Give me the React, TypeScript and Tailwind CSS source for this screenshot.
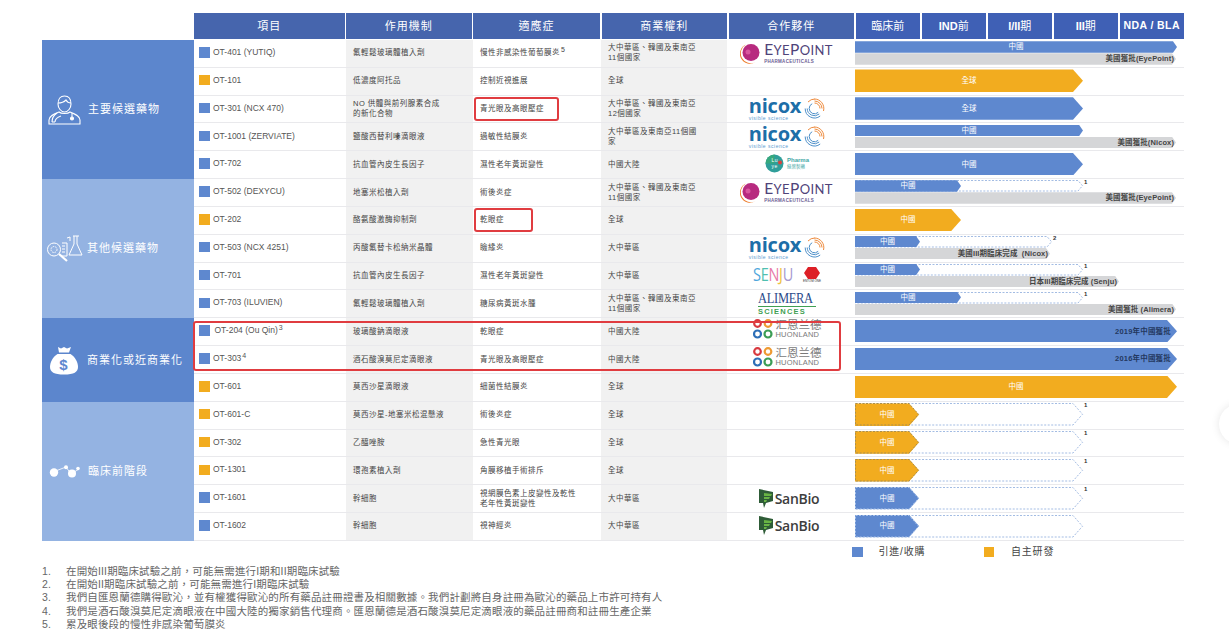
const BLUE = "#5e88cf";
const START = 855;

type Bar = {
  end: number;
  color: "blue" | "orange" | "gray";
  label: string;
  track?: number;
  note?: string;
  dashed?: boolean;
  dark?: boolean;
};

type Row = {
  name: string;
  sup?: string;
  tone: "blue" | "orange";
  mech: string[];
  ind: string[];
  indSup?: string;
  rights: string[];
  partner?: "eyepoint" | "nicox" | "luye" | "senju" | "alimera" | "huonland" | "sanbio";
  bars: Bar[];
  box?: number;
  nudge?: boolean;
};

const rights11 = ["大中華區、韓國及東南亞", "11個國家"];
const usEye: Bar = { end: 1176, color: "gray", label: "美國獲批(EyePoint)" };

const rows: Row[] = [
  { name: "OT-401 (YUTIQ)", tone: "blue", mech: ["氟輕鬆玻璃體植入劑"], ind: ["慢性非感染性葡萄膜炎"], indSup: "5", rights: rights11, partner: "eyepoint", bars: [{ end: 1177, color: "blue", label: "中國" }, usEye] },
  { name: "OT-101", tone: "orange", mech: ["低濃度阿托品"], ind: ["控制近視進展"], rights: ["全球"], bars: [{ end: 1083, color: "orange", label: "全球" }] },
  { name: "OT-301 (NCX 470)", tone: "blue", mech: ["NO 供體與前列腺素合成", "的新化合物"], ind: ["青光眼及高眼壓症"], box: 85, rights: ["大中華區、韓國及東南亞", "12個國家"], partner: "nicox", bars: [{ end: 1083, color: "blue", label: "全球" }] },
  { name: "OT-1001 (ZERVIATE)", tone: "blue", mech: ["鹽酸西替利嗪滴眼液"], ind: ["過敏性結膜炎"], rights: ["大中華區及東南亞11個國", "家"], partner: "nicox", bars: [{ end: 1083, color: "blue", label: "中國" }, { end: 1176, color: "gray", label: "美國獲批(Nicox)" }] },
  { name: "OT-702", tone: "blue", mech: ["抗血管內皮生長因子"], ind: ["濕性老年黃斑變性"], rights: ["中國大陸"], partner: "luye", bars: [{ end: 1083, color: "blue", label: "中國" }] },
  { name: "OT-502 (DEXYCU)", tone: "blue", mech: ["地塞米松植入劑"], ind: ["術後炎症"], rights: rights11, partner: "eyepoint", bars: [{ end: 961, color: "blue", label: "中國", track: 1083, note: "1" }, usEye] },
  { name: "OT-202", tone: "orange", mech: ["酪氨酸激酶抑制劑"], ind: ["乾眼症"], box: 59, rights: ["全球"], bars: [{ end: 961, color: "orange", label: "中國" }] },
  { name: "OT-503 (NCX 4251)", tone: "blue", mech: ["丙酸氟替卡松納米晶體"], ind: ["瞼緣炎"], rights: ["大中華區"], partner: "nicox", bars: [{ end: 920, color: "blue", label: "中國", track: 1052, note: "2" }, { end: 1050, color: "gray", label: "美國III期臨床完成  (Nicox)" }] },
  { name: "OT-701", tone: "blue", mech: ["抗血管內皮生長因子"], ind: ["濕性老年黃斑變性"], rights: ["大中華區"], partner: "senju", bars: [{ end: 920, color: "blue", label: "中國", track: 1083, note: "1" }, { end: 1119, color: "gray", label: "日本III期臨床完成 (Senju)" }] },
  { name: "OT-703 (ILUVIEN)", tone: "blue", mech: ["氟輕鬆玻璃體植入劑"], ind: ["糖尿病黃斑水腫"], rights: rights11, partner: "alimera", bars: [{ end: 961, color: "blue", label: "中國", track: 1083, note: "1" }, { end: 1176, color: "gray", label: "美國獲批 (Alimera)" }] },
  { name: "OT-204 (Ou Qin)", sup: "3", nudge: true, tone: "blue", mech: ["玻璃酸鈉滴眼液"], ind: ["乾眼症"], rights: ["中國大陸"], partner: "huonland", bars: [{ end: 1177, color: "blue", label: "2019年中國獲批", dark: true }] },
  { name: "OT-303", sup: "4", tone: "blue", mech: ["酒石酸溴莫尼定滴眼液"], ind: ["青光眼及高眼壓症"], rights: ["中國大陸"], partner: "huonland", bars: [{ end: 1177, color: "blue", label: "2016年中國獲批", dark: true }] },
  { name: "OT-601", tone: "orange", mech: ["莫西沙星滴眼液"], ind: ["細菌性結膜炎"], rights: ["全球"], bars: [{ end: 1177, color: "orange", label: "中國" }] },
  { name: "OT-601-C", tone: "orange", mech: ["莫西沙星-地塞米松混懸液"], ind: ["術後炎症"], rights: ["全球"], bars: [{ end: 919, color: "orange", label: "中國", track: 1083, note: "1", dashed: true }] },
  { name: "OT-302", tone: "orange", mech: ["乙醯唑胺"], ind: ["急性青光眼"], rights: ["全球"], bars: [{ end: 919, color: "orange", label: "中國", track: 1083, note: "1", dashed: true }] },
  { name: "OT-1301", tone: "orange", mech: ["環孢素植入劑"], ind: ["角膜移植手術排斥"], rights: ["全球"], bars: [{ end: 919, color: "orange", label: "中國", track: 1083, note: "1", dashed: true }] },
  { name: "OT-1601", tone: "blue", mech: ["幹細胞"], ind: ["視網膜色素上皮變性及乾性", "老年性黃斑變性"], rights: ["大中華區"], partner: "sanbio", bars: [{ end: 919, color: "blue", label: "中國", track: 1083, note: "1", dashed: true }] },
  { name: "OT-1602", tone: "blue", mech: ["幹細胞"], ind: ["視神經炎"], rights: ["大中華區"], partner: "sanbio", bars: [{ end: 919, color: "blue", label: "中國", track: 1083, dashed: true }] },
];

const headers = [
  { label: "項目", w: "w-[150.500px]" },
  { label: "作用機制", w: "w-[125.500px]" },
  { label: "適應症", w: "w-[127px]" },
  { label: "商業權利", w: "w-[125.500px]" },
  { label: "合作夥伴", w: "w-[125.500px]" },
];

const phases = [
  { text: "臨床前", latin: "" },
  { text: "前", latin: "IND" },
  { text: "期", latin: "I/II" },
  { text: "期", latin: "III" },
  { text: "", latin: "NDA / BLA" },
];

const notes = [
  "在開始III期臨床試驗之前\uFF0C可能無需進行I期和II期臨床試驗",
  "在開始II期臨床試驗之前\uFF0C可能無需進行I期臨床試驗",
  "我們自匯恩蘭德購得歐沁\uFF0C並有權獲得歐沁的所有藥品註冊證書及相關數據。我們計劃將自身註冊為歐沁的藥品上市許可持有人",
  "我們是酒石酸溴莫尼定滴眼液在中國大陸的獨家銷售代理商。匯恩蘭德是酒石酸溴莫尼定滴眼液的藥品註冊商和註冊生產企業",
  "累及眼後段的慢性非感染葡萄膜炎",
];

const DoctorIcon = () => (
  <svg width="33" height="30" viewBox="0 0 33 30" fill="none" stroke="white" strokeWidth="1.1">
    <path d="M10 9c0-5 2.500-8 6.500-8s6.500 3 6.500 8c0 4-3 8-6.500 8S10 13 10 9z" />
    <path d="M10 8c3 0 6-1 8-3 1 2 3 3 5 3" />
    <path d="M1 29v-4c0-4 5-6 10-8 2 2 9 2 11 0 5 2 10 4 10 8v4z" />
    <path d="M9 18c-3 2-5 5-5 9M4 27h3M24 18v4" />
    <path d="M7 27c0-3 3-5 6-6" />
    <circle cx="24" cy="23.500" r="1.500" fill="white" />
  </svg>
);

const LabIcon = () => (
  <svg width="37" height="27" viewBox="0 0 37 27" fill="none" stroke="white" strokeWidth="1">
    <circle cx="8" cy="14.500" r="6.500" />
    <circle cx="8" cy="14.500" r="3" strokeDasharray="1.500 1" />
    <path d="M13 19l8 7" strokeWidth="2.200" />
    <path d="M16 8h5v13h-5M16 11h3M16 14h3M16 17h3" />
    <path d="M21 3l3-1v4M27 1h6M28 1v8l-5 11h13L31 9V1" />
  </svg>
);

const BagIcon = () => (
  <svg width="30" height="29" viewBox="0 0 30 29">
    <path d="M9 1l3 1.500L15 1l3 1.500L22 1l-2 5.500h-10z" fill="white" />
    <path d="M8.500 8h13C26 11 29 16 29 21c0 5-4 7.500-14 7.500S1 26 1 21C1 16 4 11 8.500 8z" fill="white" />
    <text x="15" y="24" textAnchor="middle" fontSize="15" fontWeight="700" fill={BLUE} fontFamily="Liberation Sans">$</text>
  </svg>
);

const MoleculeIcon = () => (
  <svg width="31" height="13" viewBox="0 0 31 13" fill="white" stroke="white">
    <path d="M4 7L17 2l5 7 8-5" strokeWidth="0.800" fill="none" />
    <circle cx="5" cy="7.500" r="4.200" stroke="none" />
    <circle cx="17" cy="2.200" r="2" stroke="none" />
    <circle cx="23" cy="8.500" r="4" stroke="none" />
    <circle cx="29" cy="3.500" r="1.800" stroke="none" />
  </svg>
);

const EyePoint = () => (
  <div className="flex items-center gap-[4px] ml-[-1px]">
    <svg width="20" height="21" viewBox="0 0 20 21" className="shrink-0">
      <path d="M6 1.500A10 10 0 1 0 15.500 19 9 9 0 0 1 6 1.500z" fill="#ee7d2d" />
      <circle cx="11" cy="9.500" r="8.500" fill="#b72a7f" />
      <circle cx="8" cy="9" r="2.500" fill="#d9569f" />
    </svg>
    <div className="flex flex-col leading-none text-[#4f4379]">
      <span className="[font-family:Lato,sans-serif] text-[15.500px] tracking-[0.4px] leading-[14px] whitespace-nowrap">
        E<span className="text-[13px]">YE</span>P<span className="text-[13px]">OINT</span>
      </span>
      <span className="text-[4.500px] font-bold tracking-[0.3px] mt-[3px] text-[#6b5d92] whitespace-nowrap">PHARMACEUTICALS</span>
    </div>
  </div>
);

const Nicox = () => (
  <div className="flex items-start gap-[3px] mt-[1px]">
    <div className="flex flex-col">
      <span className="[font-family:'Open_Sans',sans-serif] font-bold text-[20px] leading-[16px] text-[#1d6ea8] tracking-[-0.2px]">nicox</span>
      <span className="text-[5px] leading-[6px] mt-[1px] text-[#5b9bd0] whitespace-nowrap">visible science</span>
    </div>
    <svg width="21" height="21" viewBox="0 0 21 21" fill="none" strokeWidth="1" className="shrink-0">
      <path d="M10.500 1a9.500 9.500 0 0 1 9 12" stroke="#ee8a3c" />
      <path d="M4 4a9.500 9.500 0 0 1 7-3" stroke="#ee8a3c" />
      <path d="M10.500 3a7.500 7.500 0 0 1 7.500 7.500" stroke="#ee8a3c" />
      <path d="M10.500 5a5.500 5.500 0 0 1 5.500 5.500" stroke="#ee8a3c" />
      <path d="M1.200 10.500a9.300 9.300 0 0 0 15 7.500" stroke="#4c8fc9" />
      <path d="M3.200 10.500a7.300 7.300 0 0 0 12 5.500" stroke="#4c8fc9" />
      <path d="M5.200 10.500a5.300 5.300 0 0 0 9 3.800" stroke="#4c8fc9" />
      <path d="M5.200 10.500a5.300 5.300 0 0 1 3-4.800" stroke="#4c8fc9" />
    </svg>
  </div>
);

const Luye = () => (
  <div className="flex items-center gap-[3px] mt-[-2px]">
    <svg width="19" height="19" viewBox="0 0 19 19" className="shrink-0">
      <circle cx="9.500" cy="9.500" r="9" fill="#2f9e9a" />
      <path d="M9.500.5a9 9 0 0 0-9 9h9z" fill="#37a87e" />
      <circle cx="15" cy="8.500" r="2" fill="#d9433d" />
      <text x="6.500" y="8" fontSize="5" fill="white" fontFamily="Liberation Sans">Lu</text>
      <text x="6.500" y="14" fontSize="5" fill="white" fontFamily="Liberation Sans">ye</text>
    </svg>
    <div className="flex flex-col tracking-normal">
      <span className="text-[6px] leading-[7px] font-bold text-[#43a8a6]">Pharma</span>
      <span className="text-[4.500px] leading-[6px] text-[#43a8a6]">綠葉製藥</span>
    </div>
  </div>
);

const Senju = () => (
  <div className="flex items-center gap-[10px] mt-[-3px]">
    <span className="inline-block scale-y-[1.3] [font-family:'Open_Sans',sans-serif] text-[14.500px] leading-[18px] tracking-[-0.3px]">
      <span className="text-[#4fa6dc]">S</span>
      <span className="text-[#4fbfb0]">E</span>
      <span className="text-[#e77aa8]">N</span>
      <span className="text-[#eec241]">J</span>
      <span className="text-[#a79ad0]">U</span>
    </span>
    <div className="flex flex-col items-center">
      <svg width="16" height="12" viewBox="0 0 16 12">
        <path d="M4 0h8l4 6-4 6H4L0 6z" fill="#dd1f26" />
      </svg>
      <span className="text-[3px] leading-[4px] tracking-normal text-[#333] whitespace-nowrap">ENTOM ONE</span>
    </div>
  </div>
);

const Alimera = () => (
  <div className="flex flex-col mt-[-1px] w-[58px] tracking-normal">
    <span className="[font-family:'Liberation_Serif',serif] text-[12.500px] leading-[14px] text-[#2b4b8a] tracking-[-0.3px] scale-y-[1.15] whitespace-nowrap">ALIMERA</span>
    <div className="h-[1px] bg-[#3fa052] mt-[1px]" />
    <span className="text-[7.500px] leading-[9px] font-bold text-[#3fa052] tracking-[1.2px] whitespace-nowrap">SCIENCES</span>
  </div>
);

const Huonland = () => (
  <div className="flex items-center gap-[3px] mt-[-5px] tracking-normal">
    <svg width="20" height="20" viewBox="0 0 20 20" fill="none" strokeWidth="2.200" className="shrink-0">
      <circle cx="4.500" cy="4.500" r="3.300" stroke="#d8393f" />
      <circle cx="15" cy="4.500" r="3.300" stroke="#ee9a32" />
      <circle cx="4.500" cy="15" r="3.500" stroke="#2e6fb7" />
      <circle cx="15" cy="15" r="3.500" stroke="#3c9d55" />
    </svg>
    <div className="flex flex-col text-[#7a7a7a]">
      <span className="text-[11.500px] leading-[12px] whitespace-nowrap">汇恩兰德</span>
      <span className="text-[7.500px] leading-[8px] tracking-[0.2px] whitespace-nowrap">HUONLAND</span>
    </div>
  </div>
);

const SanBio = () => (
  <div className="flex items-center gap-[1px] ml-[4px] tracking-normal">
    <svg width="15" height="20" viewBox="0 0 15 20" className="shrink-0">
      <path d="M0 0l14 3v9l-7 2-2 5-1-5H0z" fill="#2e5c37" />
      <path d="M5 4l8 1-1 2H5zM5 8h6l-1 2H5zM5 11h3l-1 2H5z" fill="#69b545" />
    </svg>
    <span className="[font-family:'Open_Sans',sans-serif] font-semibold text-[14px] leading-none text-[#3d3d3d] tracking-[-0.3px]">SanBio</span>
  </div>
);

const logos = {
  eyepoint: EyePoint,
  nicox: Nicox,
  luye: Luye,
  senju: Senju,
  alimera: Alimera,
  huonland: Huonland,
  sanbio: SanBio,
};

const Outline = ({ width, height, tip, stroke }: { width: number; height: number; tip: number; stroke: string }) => (
  <svg width={width} height={height} className="absolute left-0 top-0 overflow-visible">
    <path
      d={`M0.500 0.500H${width - tip}L${width - 0.5} ${height / 2}L${width - tip} ${height - 0.5}H0.500V0.500`}
      fill="none"
      stroke={stroke}
      strokeWidth="1"
      strokeDasharray="2 1.500"
    />
  </svg>
);

const Shape = ({ bar, height }: { bar: Bar; height: number }) => {
  const big = height > 15;
  const bg = bar.color === "blue" ? "bg-[#5e88cf]" : bar.color === "orange" ? "bg-[#f2ac1f]" : "bg-[#d5d6d8]";
  return (
    <div
      className={`${bg} ${big ? "[clip-path:polygon(0_0,calc(100%-10px)_0,100%_50%,calc(100%-10px)_100%,0_100%)]" : "[clip-path:polygon(0_0,calc(100%-4px)_0,100%_50%,calc(100%-4px)_100%,0_100%)]"} flex items-center h-full`}
      style={{ width: bar.end - START }}
    >
      {bar.color === "gray" ? (
        <span className="ml-auto pr-[2px] text-[7.500px] font-bold text-[#444] tracking-[0.1px] whitespace-pre">{bar.label}</span>
      ) : bar.dark ? (
        <span className="ml-auto pr-[6px] text-[7.500px] font-bold text-[#24385f] tracking-[0.2px] whitespace-nowrap">{bar.label}</span>
      ) : (
        <span className="w-full text-center text-[7.500px] text-white tracking-[0.1px]">{bar.label}</span>
      )}
    </div>
  );
};

const BarRow = ({ bar, height }: { bar: Bar; height: number }) => {
  if (!bar.track) {
    return (
      <div style={{ height }}>
        <Shape bar={bar} height={height} />
      </div>
    );
  }
  const width = bar.track - START;
  const tip = height > 15 ? 10 : 5;
  return (
    <div className="relative" style={{ height, width }}>
      <Outline width={width} height={height} tip={tip} stroke="#a3bce3" />
      <div className="relative h-full">
        <Shape bar={bar} height={height} />
        {bar.dashed && (
          <Outline
            width={bar.end - START}
            height={height}
            tip={tip}
            stroke={bar.color === "orange" ? "#a98f4f" : "#a9c2e8"}
          />
        )}
      </div>
      {bar.note && (
        <span className="absolute left-full top-[-1px] ml-[1px] text-[6px] leading-[7px] font-bold text-[#333]">{bar.note}</span>
      )}
    </div>
  );
};

const TableRow = ({ row }: { row: Row }) => {
  const Logo = row.partner ? logos[row.partner] : null;
  const height = row.bars.length > 1 ? 11.5 : 22.5;
  return (
    <div className="flex h-[27.830px] border-b border-[#e9e9ec] text-[7.500px] text-[#444] tracking-[0.5px]">
      <div className="w-[152px] flex items-center pl-[5px] pb-[2px] text-[8.500px] text-[#555] tracking-normal">
        <span className={`w-[10.500px] h-[10.500px] shrink-0 ${row.tone === "blue" ? "bg-[#5e88cf]" : "bg-[#f2ac1f]"}`} />
        <span className={`${row.nudge ? "ml-[5px]" : "ml-[3.500px]"} whitespace-nowrap`}>
          {row.name}
          {row.sup && <sup className="text-[7px] ml-[1px]">{row.sup}</sup>}
        </span>
      </div>
      <div className="w-[126.500px] bg-[#f1f1f1] flex flex-col justify-center pl-[7px] leading-[10px]">
        {row.mech.map((t) => (
          <span key={t} className="whitespace-nowrap">{t}</span>
        ))}
      </div>
      <div className="w-[128.500px] relative flex flex-col justify-center pl-[7.500px] leading-[10px]">
        {row.ind.map((t) => (
          <span key={t} className="whitespace-nowrap">
            {t}
            {row.indSup && <sup className="text-[7px] ml-[1px]">{row.indSup}</sup>}
          </span>
        ))}
        {row.box && (
          <div
            className="absolute left-[1px] top-[1px] h-[24px] border-2 border-[#e03c40] rounded-[3px]"
            style={{ width: row.box }}
          />
        )}
      </div>
      <div className="w-[126px] bg-[#f1f1f1] flex flex-col justify-center pl-[7px] leading-[10px]">
        {row.rights.map((t) => (
          <span key={t} className="whitespace-nowrap">{t}</span>
        ))}
      </div>
      <div className="w-[128px] flex items-center justify-center pr-[8px]">{Logo && <Logo />}</div>
      <div className="w-[329px] flex flex-col justify-center gap-[0.500px] pb-[1px]">
        {row.bars.map((bar) => (
          <BarRow key={bar.label} bar={bar} height={height} />
        ))}
      </div>
    </div>
  );
};

const groups = [
  { label: "主要候選藥物", icon: <DoctorIcon />, bg: "bg-[#5c86cd]", h: "h-[139.150px]", gap: "gap-[7px]", pl: "pl-[6px]" },
  { label: "其他候選藥物", icon: <LabIcon />, bg: "bg-[#94b3e2]", h: "h-[139.150px]", gap: "gap-[4px]", pl: "pl-[4px]" },
  { label: "商業化或近商業化", icon: <BagIcon />, bg: "bg-[#5c86cd]", h: "h-[83.490px]", gap: "gap-[8px]", pl: "pl-[7px]" },
  { label: "臨床前階段", icon: <MoleculeIcon />, bg: "bg-[#94b3e2]", h: "h-[139.150px]", gap: "gap-[8px]", pl: "pl-[7px]" },
];

export default function App() {
  return (
    <div lang="zh-Hant" className="relative w-[1229px] h-[640px] overflow-hidden bg-white [font-family:'Liberation_Sans','Noto_Sans_CJK_TC',sans-serif]">
      <div className="pt-[13px] pl-[42px]">
        {/* Header */}
        <div className="flex ml-[152px] h-[26px] gap-[1.500px] text-white text-[11px] tracking-[1px]">
          {headers.map((h) => (
            <div key={h.label} className={`${h.w} bg-[#4665ad] flex items-center justify-center`}>{h.label}</div>
          ))}
          {phases.map((p) => (
            <div
              key={p.latin + p.text}
              className={`w-[64.500px] bg-[#3f60b5] flex items-center justify-center whitespace-nowrap ${p.latin === "NDA / BLA" ? "tracking-[0.400px] text-[10.500px]" : "tracking-normal"}`}
            >
              <span className="font-bold">{p.latin}</span>
              {p.text}
            </div>
          ))}
        </div>

        {/* Body */}
        <div className="relative flex mt-[1px]">
          <div className="w-[152px] shrink-0 flex flex-col pr-[0.500px]">
            {groups.map((g) => (
              <div key={g.label} className={`${g.bg} ${g.h} ${g.gap} ${g.pl} flex items-center text-white text-[11px] tracking-[1px] whitespace-nowrap`}>
                {g.icon}
                <span>{g.label}</span>
              </div>
            ))}
          </div>
          <div className="flex flex-col">
            {rows.map((row) => (
              <TableRow key={row.name} row={row} />
            ))}
          </div>
          {/* highlight over the two commercial rows */}
          <div className="absolute left-[151px] top-[281px] w-[648px] h-[50px] border-2 border-[#e03c40] rounded-[3px]" />
        </div>

        {/* Legend */}
        <div className="flex items-center h-[20px] mt-[1px] pl-[810px] text-[10px] text-[#444] tracking-[0.8px]">
          <span className="w-[10.500px] h-[10.500px] bg-[#5e88cf]" />
          <span className="ml-[16px] w-[105px]">引進/收購</span>
          <span className="w-[10.500px] h-[10.500px] bg-[#f2ac1f]" />
          <span className="ml-[17px]">自主研發</span>
        </div>

        {/* Footnotes */}
        <ol className="mt-[3px] text-[10.500px] leading-[13.200px] text-[#666] tracking-[0.15px]">
          {notes.map((n, i) => (
            <li key={n} className="flex">
              <span className="w-[24px] shrink-0">{i + 1}.</span>
              <span className="whitespace-nowrap">{n}</span>
            </li>
          ))}
        </ol>
      </div>

      {/* floating round button at the page edge */}
      <div className="absolute left-[1219px] top-[404px] w-[40px] h-[40px] rounded-full bg-white shadow-[0_0_8px_rgba(0,0,0,0.1)]" />
    </div>
  );
}
